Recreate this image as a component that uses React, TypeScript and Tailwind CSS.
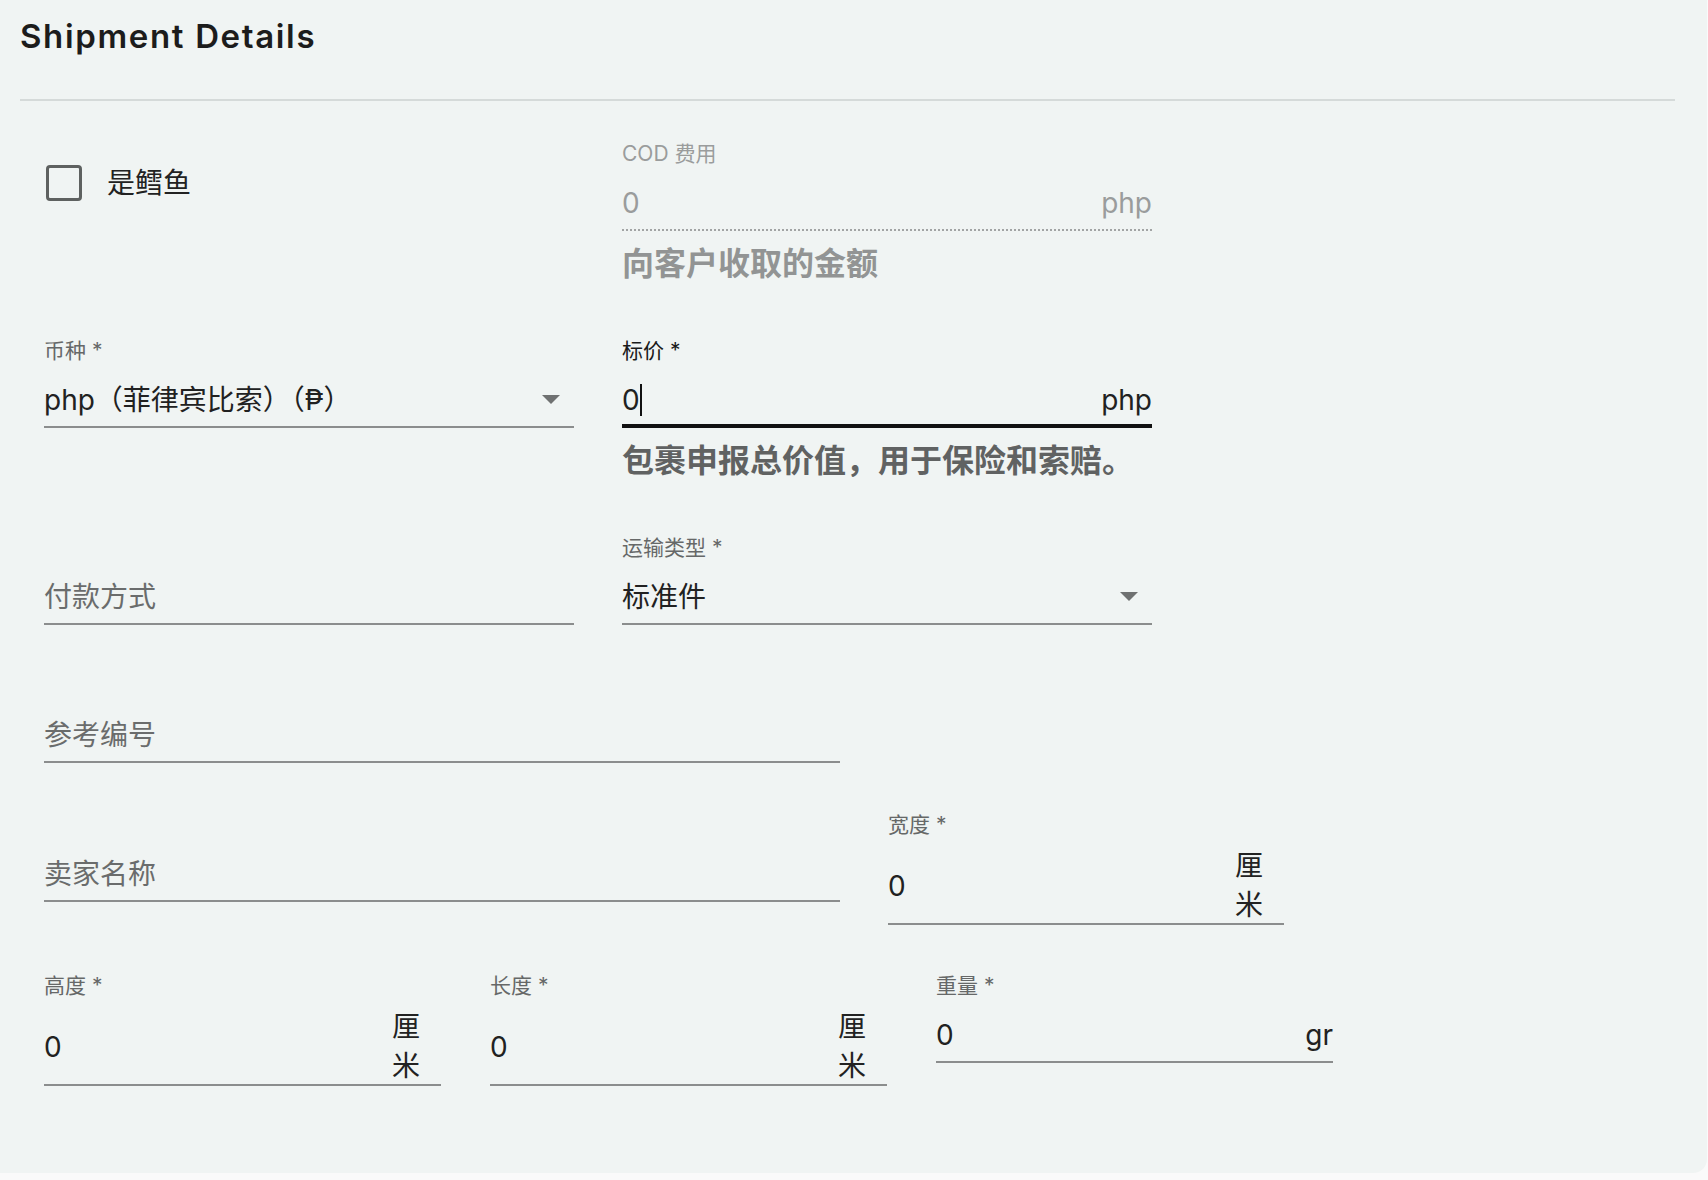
import React from "react";

type FieldProps = {
  widthClass: string;
  label?: string;
  labelClass?: string;
  value?: React.ReactNode;
  valueClass?: string;
  right?: React.ReactNode;
  variant?: "normal" | "focused" | "dotted";
  tall?: boolean;
  helper?: string;
  helperClass?: string;
};

function Arrow() {
  return (
    <svg width="18" height="9" viewBox="0 0 18 9" className="mr-[14px] shrink-0">
      <path d="M0 0 L9 9 L18 0 Z" fill="#6f7171" />
    </svg>
  );
}

function CmUnit() {
  return (
    <div className="mr-[21px] flex flex-col text-[28px] leading-[39px] text-[#222]">
      <span>厘</span>
      <span>米</span>
    </div>
  );
}

function Field({
  widthClass,
  label,
  labelClass = "text-[#666868]",
  value,
  valueClass = "text-[#212121]",
  right,
  variant = "normal",
  tall = false,
  helper,
  helperClass = "text-[#606262]",
}: FieldProps) {
  const rowBase = "flex items-center justify-between text-[28px] leading-[40px]";
  let rowClass = "";
  if (variant === "focused") {
    rowClass = "h-[48px] pb-[5px] border-b-4 border-[#111111]";
  } else if (variant === "dotted") {
    rowClass = "h-[48px] pb-[7px] border-b-2 border-dotted border-[#a2a4a4]";
  } else if (tall) {
    rowClass = "h-[71px] pb-[6px] border-b-2 border-[#8b8d8d]";
  } else {
    rowClass = "h-[48px] pb-[7px] border-b-2 border-[#8b8d8d]";
  }
  return (
    <div className={`${widthClass} flex flex-col shrink-0`}>
      <div className={`h-[24px] text-[21px] leading-[24px] whitespace-nowrap ${labelClass}`}>{label ?? ""}</div>
      <div className={`mt-[17px] ${rowBase} ${rowClass}`}>
        <div className={`flex items-center whitespace-nowrap ${valueClass}`}>{value}</div>
        {right}
      </div>
      {helper ? (
        <div className={`mt-[13px] text-[32px] leading-[40px] font-bold whitespace-nowrap ${helperClass}`}>{helper}</div>
      ) : null}
    </div>
  );
}

export default function App() {
  return (
    <div className="min-h-screen bg-[#fafafa] [font-family:Inter,'Noto_Sans_CJK_SC',sans-serif]">
      <div className="w-[1707px] h-[1173px] bg-[#f0f4f3] rounded-br-[14px] flex flex-col">
        <div className="pl-[20px] pt-[16px]">
          <h1 className="text-[33px] leading-[40px] font-semibold tracking-[0.05em] text-[#1c1c1c]">
            Shipment Details
          </h1>
          <div className="mt-[43px] h-[2px] w-[1655px] bg-[#d5dad9]" />
        </div>

        <div className="pl-[44px] flex flex-col">
          {/* Row A */}
          <div className="mt-[41px] flex items-start gap-[48px]">
            <div className="w-[530px] shrink-0 pt-[21px] pl-[2px] flex items-center gap-[25px]">
              <div className="w-[36px] h-[36px] border-[3.5px] border-[#5e6160] rounded-[4px]" />
              <span className="text-[28px] leading-[40px] text-[#222]">是鳕鱼</span>
            </div>
            <Field
              widthClass="w-[530px]"
              label="COD 费用"
              labelClass="text-[#9a9c9c]"
              value={<span>0</span>}
              valueClass="text-[#9a9c9c]"
              right={<span className="text-[#9a9c9c]">php</span>}
              variant="dotted"
              helper="向客户收取的金额"
              helperClass="text-[#929494]"
            />
          </div>

          {/* Row B */}
          <div className="mt-[55px] flex items-start gap-[48px]">
            <Field
              widthClass="w-[530px]"
              label="币种 *"
              value={<span>php（菲律宾比索）（₱）</span>}
              right={<Arrow />}
            />
            <Field
              widthClass="w-[530px]"
              label="标价 *"
              labelClass="text-[#1a1a1a]"
              value={
                <>
                  <span>0</span>
                  <span className="inline-block w-[2px] h-[32px] bg-[#111]" />
                </>
              }
              right={<span className="text-[#212121]">php</span>}
              variant="focused"
              helper="包裹申报总价值，用于保险和索赔。"
            />
          </div>

          {/* Row C */}
          <div className="mt-[55px] flex items-start gap-[48px]">
            <Field widthClass="w-[530px]" value={<span>付款方式</span>} valueClass="text-[#6a6c6c]" />
            <Field
              widthClass="w-[530px]"
              label="运输类型 *"
              value={<span>标准件</span>}
              right={<Arrow />}
            />
          </div>

          {/* Row D */}
          <div className="mt-[49px] flex items-start gap-[48px]">
            <Field widthClass="w-[796px]" value={<span>参考编号</span>} valueClass="text-[#6a6c6c]" />
          </div>

          {/* Row E */}
          <div className="mt-[50px] flex items-start gap-[48px]">
            <Field widthClass="w-[796px]" value={<span>卖家名称</span>} valueClass="text-[#6a6c6c]" />
            <Field
              widthClass="w-[396px]"
              label="宽度 *"
              value={<span>0</span>}
              right={<CmUnit />}
              tall
            />
          </div>

          {/* Row F */}
          <div className="mt-[49px] flex items-start gap-[49px]">
            <Field widthClass="w-[397px]" label="高度 *" value={<span>0</span>} right={<CmUnit />} tall />
            <Field widthClass="w-[397px]" label="长度 *" value={<span>0</span>} right={<CmUnit />} tall />
            <Field
              widthClass="w-[397px]"
              label="重量 *"
              value={<span>0</span>}
              right={<span className="text-[#212121]">gr</span>}
            />
          </div>
        </div>
      </div>
    </div>
  );
}
